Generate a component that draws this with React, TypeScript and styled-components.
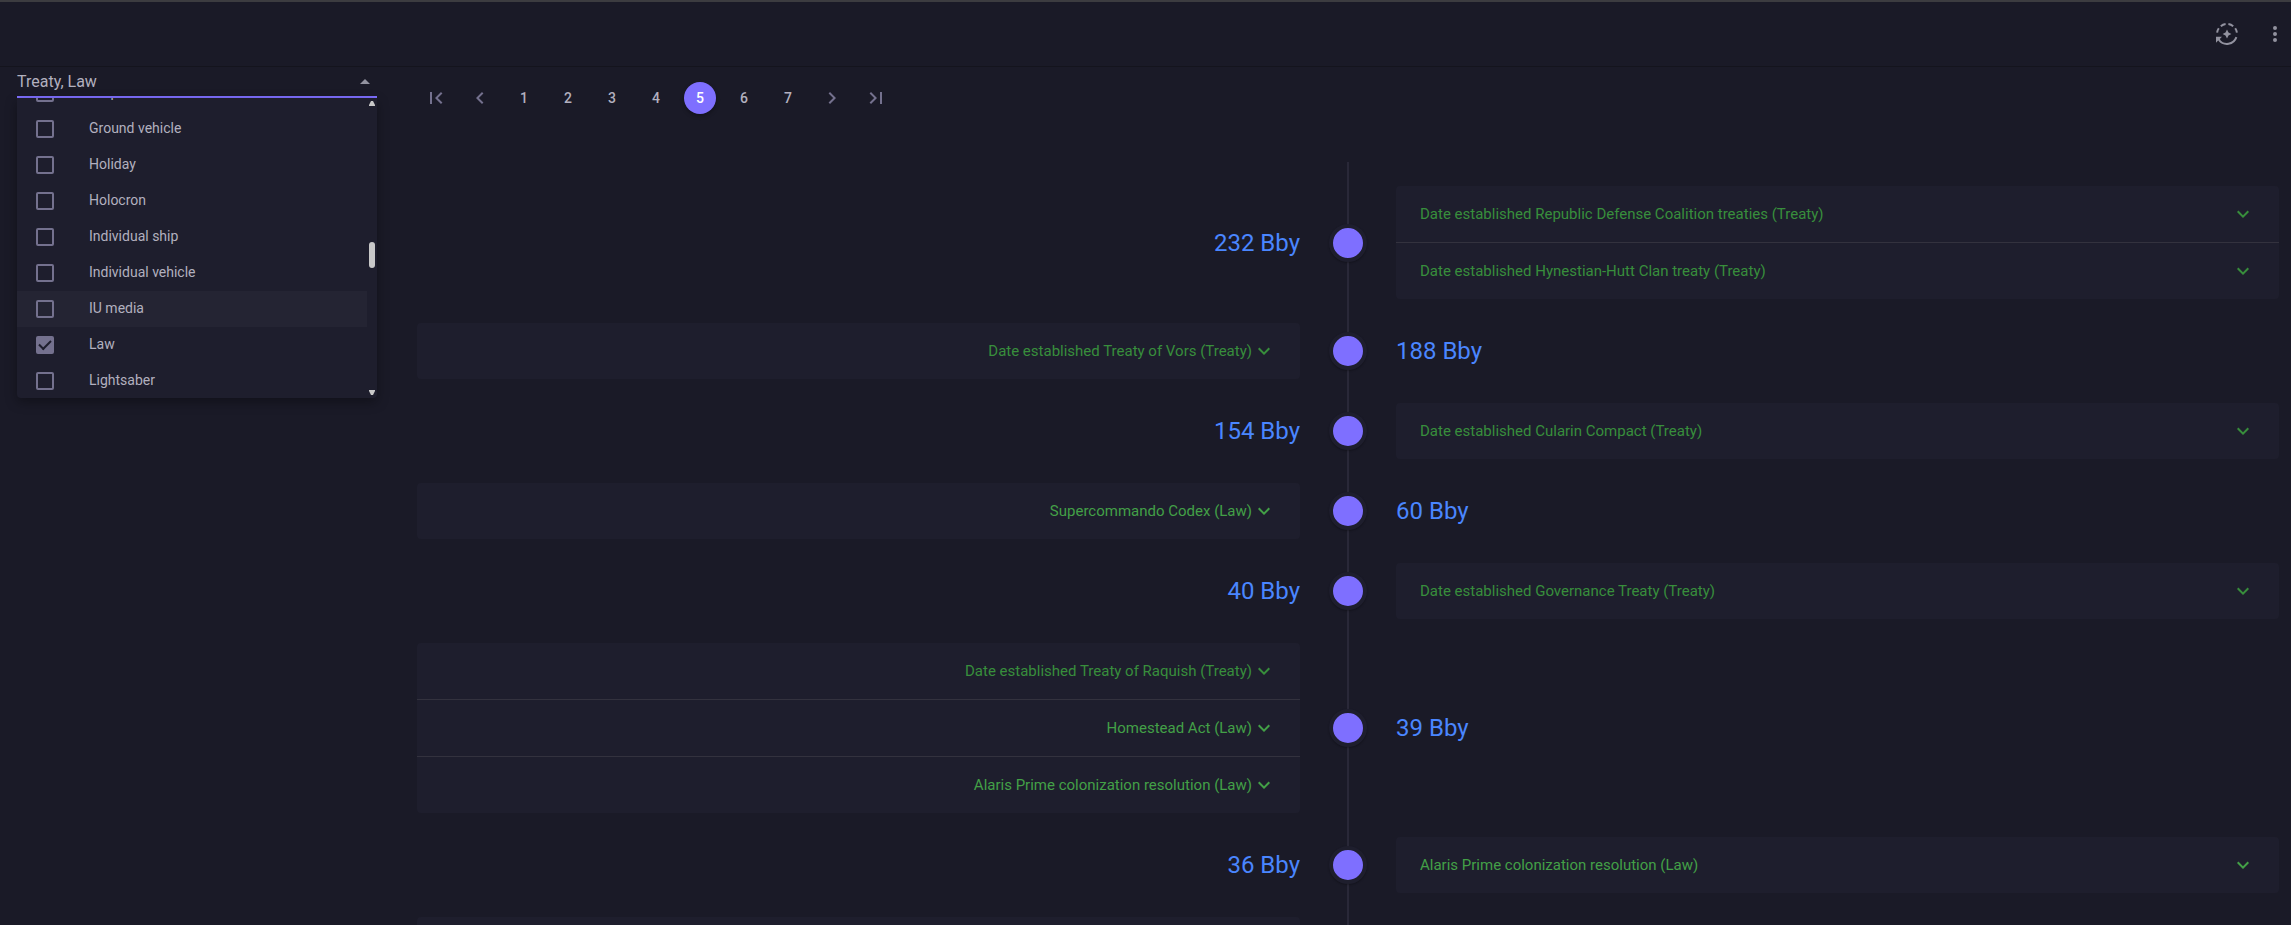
import React, { useLayoutEffect, useRef, useState } from "react";
import styled, { createGlobalStyle } from "styled-components";

const color = {
  background: "#1a1a27",
  surface: "#1e1e2d",
  hover: "#242433",
  primary: "#7e6fff",
  info: "#4a86ff",
  text: "#b2b0bf",
  textMuted: "#92929f",
  action: "#74718e",
  line: "#33323e",
  divider: "#292838",
};

const GlobalStyle = createGlobalStyle`
  *, *::before, *::after { box-sizing: border-box; }
  html { height: 100%; background: ${color.background}; }
  body {
    margin: 0;
    height: 100%;
    overflow: hidden;
    font-family: Roboto, "Liberation Sans", sans-serif;
    color: ${color.text};
  }
  #root { height: 100%; }
  button { font: inherit; color: inherit; background: none; border: 0; padding: 0; margin: 0; cursor: pointer; }
  svg { display: block; flex: none; fill: currentColor; }
`;

const Page = styled.div`
  min-height: 100%;
  border-top: 2px solid #3c3c40;
`;

const AppBar = styled.header`
  display: flex;
  align-items: center;
  justify-content: flex-end;
  gap: 24px;
  height: 65px;
  padding-right: 4px;
  border-bottom: 1px solid #14141d;
`;

const IconButton = styled.button`
  display: flex;
  color: ${color.textMuted};
`;

const Content = styled.div`
  display: flex;
  align-items: flex-start;
  gap: 40px;
  padding: 0 12px 0 17px;
`;

const Filter = styled.aside`
  position: relative;
  flex: none;
  width: 360px;
`;

const SelectField = styled.button`
  display: flex;
  align-items: center;
  justify-content: space-between;
  width: 100%;
  height: 31px;
  border-bottom: 2px solid ${color.primary};
  font-size: 16px;
  line-height: 24px;
  text-align: left;

  svg { color: ${color.textMuted}; }
`;

const Menu = styled.div`
  position: absolute;
  top: 100%;
  left: 0;
  right: 0;
  display: flex;
  height: 300px;
  background: ${color.surface};
  border-radius: 0 0 4px 4px;
  box-shadow: 0 4px 12px rgba(0, 0, 0, 0.34);
`;

const Options = styled.div`
  flex: 1;
  height: 100%;
  overflow: hidden;
`;

const Option = styled.label<{ $hovered?: boolean }>`
  display: flex;
  align-items: center;
  gap: 35px;
  height: 36px;
  padding-left: 19px;
  font-size: 14px;
  line-height: 20px;
  background: ${(p) => (p.$hovered ? color.hover : "transparent")};
`;

const OptionText = styled.span`
  padding-bottom: 2px;
`;

const TickBox = styled.input`
  appearance: none;
  display: grid;
  place-items: center;
  flex: none;
  width: 18px;
  height: 18px;
  margin: 0;
  border: 2px solid ${color.action};
  border-radius: 2px;

  &:checked { background: ${color.action}; }

  &:checked::after {
    content: "";
    width: 12px;
    height: 7px;
    margin-bottom: 3px;
    border-left: 2px solid ${color.surface};
    border-bottom: 2px solid ${color.surface};
    transform: rotate(-45deg);
  }
`;

const ScrollRail = styled.div`
  display: flex;
  flex-direction: column;
  align-items: center;
  width: 10px;
  padding: 3px 0;
  color: #c8c8c8;
`;

const ScrollTrack = styled.div`
  flex: 1;
  padding-top: 136px;
`;

const ScrollThumb = styled.div`
  width: 6px;
  height: 26px;
  border-radius: 3px;
  background: #c8c8c8;
`;

const Main = styled.main`
  flex: 1;
  min-width: 0;
`;

const Pagination = styled.nav`
  display: flex;
  gap: 12px;
  padding: 15px 3px 48px;
`;

const PageButton = styled.button<{ $active?: boolean }>`
  display: grid;
  place-items: center;
  width: 32px;
  height: 32px;
  border-radius: 50%;
  font-size: 14px;
  line-height: 20px;
  font-weight: 500;
  color: ${(p) => (p.$active ? "#ffffff" : color.text)};
  background: ${(p) => (p.$active ? color.primary : "transparent")};
  box-shadow: ${(p) => (p.$active ? "0 2px 4px rgba(0, 0, 0, 0.3)" : "none")};

  svg { color: ${color.action}; }
`;

const Timeline = styled.ol`
  display: flex;
  flex-direction: column;
  gap: 24px;
  margin: 0;
  padding: 24px 0;
  list-style: none;
  background: linear-gradient(${color.divider}, ${color.divider}) center / 2px 100% no-repeat;
`;

const Entry = styled.li`
  display: grid;
  grid-template-columns: 1fr 96px 1fr;
  align-items: center;
`;

const Dot = styled.span`
  justify-self: center;
  width: 38px;
  height: 38px;
  border: 4px solid ${color.surface};
  border-radius: 50%;
  background: ${color.primary};
  box-shadow: 0 1px 2px rgba(0, 0, 0, 0.3);
`;

const Year = styled.h2<{ $side: Side }>`
  margin: 0;
  font-size: 24px;
  line-height: 32px;
  font-weight: 400;
  color: ${color.info};
  text-align: ${(p) => (p.$side === "left" ? "right" : "left")};
`;

const Panels = styled.div`
  border-radius: 4px;
  background: ${color.surface};
`;

const PanelHeader = styled.button<{ $side: Side; $kind: Kind }>`
  display: flex;
  align-items: center;
  justify-content: ${(p) => (p.$side === "left" ? "flex-end" : "space-between")};
  width: 100%;
  height: 56px;
  padding: 0 24px;
  font-size: 15px;
  line-height: 20px;
  color: ${(p) => (p.$kind === "Law" ? "#43a047" : "#388e3c")};

  & + & {
    height: 57px;
    border-top: 1px solid ${color.line};
  }
`;

type Side = "left" | "right";
type Kind = "Law" | "Treaty";

const entries: { year: string; side: Side; events: [string, Kind][] }[] = [
  {
    year: "232 Bby",
    side: "right",
    events: [
      ["Date established Republic Defense Coalition treaties", "Treaty"],
      ["Date established Hynestian-Hutt Clan treaty", "Treaty"],
    ],
  },
  { year: "188 Bby", side: "left", events: [["Date established Treaty of Vors", "Treaty"]] },
  { year: "154 Bby", side: "right", events: [["Date established Cularin Compact", "Treaty"]] },
  { year: "60 Bby", side: "left", events: [["Supercommando Codex", "Law"]] },
  { year: "40 Bby", side: "right", events: [["Date established Governance Treaty", "Treaty"]] },
  {
    year: "39 Bby",
    side: "left",
    events: [
      ["Date established Treaty of Raquish", "Treaty"],
      ["Homestead Act", "Law"],
      ["Alaris Prime colonization resolution", "Law"],
    ],
  },
  { year: "36 Bby", side: "right", events: [["Alaris Prime colonization resolution", "Law"]] },
  { year: "32 Bby", side: "left", events: [["Date established Treaty", "Treaty"]] },
];

const categories = [
  "Grapes",
  "Ground vehicle",
  "Holiday",
  "Holocron",
  "Individual ship",
  "Individual vehicle",
  "IU media",
  "Law",
  "Lightsaber",
];

const paths = {
  first: "M18.41 16.59L13.82 12l4.59-4.59L17 6l-6 6 6 6zM6 6h2v12H6z",
  prev: "M15.41 7.41L14 6l-6 6 6 6 1.41-1.41L10.83 12z",
  next: "M10 6L8.59 7.41 13.17 12l-4.58 4.59L10 18l6-6z",
  last: "M5.59 7.41L10.18 12l-4.59 4.59L7 18l6-6-6-6zM16 6h2v12h-2z",
  down: "M7.41 8.59L12 13.17l4.59-4.58L18 10l-6 6-6-6z",
  dropUp: "M7 14l5-5 5 5z",
  more: "M12 8a2 2 0 1 0 0-4 2 2 0 0 0 0 4zm0 2a2 2 0 1 0 0 4 2 2 0 0 0 0-4zm0 6a2 2 0 1 0 0 4 2 2 0 0 0 0-4z",
};

const Icon = ({ name }: { name: keyof typeof paths }) => (
  <svg width="24" height="24" viewBox="0 0 24 24" aria-hidden="true">
    <path d={paths[name]} />
  </svg>
);

const UpdateIcon = () => (
  <svg width="24" height="24" viewBox="0 0 24 24" aria-hidden="true">
    <path
      d="M2.1 10.6A10 10 0 0 1 3.8 6.3M5.8 4.2A10 10 0 0 1 10.6 2.1M13.4 2.1A10 10 0 0 1 18.2 4.2M20.2 6.3A10 10 0 0 1 21.9 10.6M21.4 15.2A10 10 0 0 1 4 18"
      fill="none"
      stroke="currentColor"
      strokeWidth="2"
    />
    <path d="M1 14.7h6L4.8 17l.6 1-1.2 1-.8-.8L1 20.7zM12 7.6l1.5 2.9 2.9 1.5-2.9 1.5L12 16.4l-1.5-2.9L7.6 12l2.9-1.5z" />
  </svg>
);

const EventPanels = ({ side, events }: { side: Side; events: [string, Kind][] }) => (
  <Panels>
    {events.map(([title, kind]) => (
      <PanelHeader key={title} $side={side} $kind={kind} aria-expanded={false}>
        <span>{`${title} (${kind})`}</span>
        <Icon name="down" />
      </PanelHeader>
    ))}
  </Panels>
);

export default function App() {
  const [selected, setSelected] = useState(["Treaty", "Law"]);
  const [page, setPage] = useState(5);
  const options = useRef<HTMLDivElement>(null);

  useLayoutEffect(() => {
    if (options.current) options.current.scrollTop = 23;
  }, []);

  const toggle = (name: string) =>
    setSelected((s) => (s.includes(name) ? s.filter((n) => n !== name) : [...s, name]));

  return (
    <Page>
      <GlobalStyle />
      <AppBar>
        <IconButton aria-label="Update">
          <UpdateIcon />
        </IconButton>
        <IconButton aria-label="More">
          <Icon name="more" />
        </IconButton>
      </AppBar>
      <Content>
        <Filter>
          <SelectField aria-haspopup="listbox" aria-expanded>
            <span>{selected.join(", ")}</span>
            <Icon name="dropUp" />
          </SelectField>
          <Menu>
            <Options ref={options}>
              {categories.map((name) => (
                <Option key={name} $hovered={name === "IU media"}>
                  <TickBox type="checkbox" checked={selected.includes(name)} onChange={() => toggle(name)} />
                  <OptionText>{name}</OptionText>
                </Option>
              ))}
            </Options>
            <ScrollRail aria-hidden="true">
              <svg width="6" height="5" viewBox="0 0 6 5">
                <path d="M2 0h2l2 4v1H0V4z" />
              </svg>
              <ScrollTrack>
                <ScrollThumb />
              </ScrollTrack>
              <svg width="6" height="5" viewBox="0 0 6 5">
                <path d="M0 0h6v1L4 5H2L0 1z" />
              </svg>
            </ScrollRail>
          </Menu>
        </Filter>
        <Main>
          <Pagination aria-label="Pages">
            <PageButton aria-label="First page" onClick={() => setPage(1)}>
              <Icon name="first" />
            </PageButton>
            <PageButton aria-label="Previous page" onClick={() => setPage(Math.max(1, page - 1))}>
              <Icon name="prev" />
            </PageButton>
            {[1, 2, 3, 4, 5, 6, 7].map((n) => (
              <PageButton key={n} $active={n === page} onClick={() => setPage(n)}>
                {n}
              </PageButton>
            ))}
            <PageButton aria-label="Next page" onClick={() => setPage(Math.min(7, page + 1))}>
              <Icon name="next" />
            </PageButton>
            <PageButton aria-label="Last page" onClick={() => setPage(7)}>
              <Icon name="last" />
            </PageButton>
          </Pagination>
          <Timeline>
            {entries.map(({ year, side, events }) => (
              <Entry key={year}>
                {side === "left" ? <EventPanels side={side} events={events} /> : <Year $side="left">{year}</Year>}
                <Dot />
                {side === "left" ? <Year $side="right">{year}</Year> : <EventPanels side={side} events={events} />}
              </Entry>
            ))}
          </Timeline>
        </Main>
      </Content>
    </Page>
  );
}
